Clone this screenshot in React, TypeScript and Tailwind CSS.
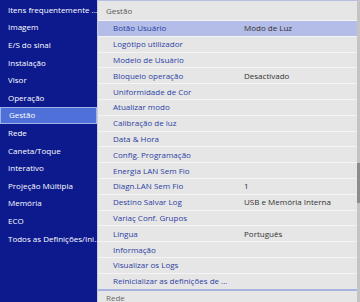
const menu = [
  "Itens frequentemente ...",
  "Imagem",
  "E/S do sinal",
  "Instalação",
  "Visor",
  "Operação",
  "Gestão",
  "Rede",
  "Caneta/Toque",
  "Interativo",
  "Projeção Múltipla",
  "Memória",
  "ECO",
  "Todos as Definições/Ini...",
];

const rows: [string, string][] = [
  ["Botão Usuário", "Modo de Luz"],
  ["Logótipo utilizador", ""],
  ["Modelo de Usuário", ""],
  ["Bloqueio operação", "Desactivado"],
  ["Uniformidade de Cor", ""],
  ["Atualizar modo", ""],
  ["Calibração de luz", ""],
  ["Data & Hora", ""],
  ["Config. Programação", ""],
  ["Energia LAN Sem Fio", ""],
  ["Diagn.LAN Sem Fio", "1"],
  ["Destino Salvar Log", "USB e Memória Interna"],
  ["Variaç Conf. Grupos", ""],
  ["Língua", "Português"],
  ["Informação", ""],
  ["Visualizar os Logs", ""],
  ["Reinicializar as definições de ...", ""],
];

export default function App() {
  return (
    <div
      className="w-[360px] h-[302px] flex overflow-hidden bg-[#e6e6e6] text-[8px] leading-none"
      style={{ fontFamily: '"Open Sans", "Noto Sans", sans-serif' }}
    >
      {/* Left menu */}
      <div className="w-[98px] shrink-0 bg-[#0c1a8e] pt-px border-r border-[#c9cce0]">
        {menu.map((m) => (
          <div
            key={m}
            className={
              m === "Gestão"
                ? "h-[17.6px] flex items-center pl-2 text-white bg-[#4f70d8] border border-[#9fb2ee]"
                : "h-[17.6px] flex items-center pl-2 text-white whitespace-nowrap"
            }
          >
            {m}
          </div>
        ))}
      </div>

      {/* Right panel */}
      <div className="flex-1 flex flex-col">
        <div className="h-[21px] shrink-0 flex items-center pl-2 text-[#5a5a5a] border-t border-[#b7bfe3] border-b border-b-[#f4f4f4]">
          Gestão
        </div>
        {rows.map(([label, value], i) => (
          <div
            key={label}
            className={
              (i === 0 ? "bg-[#b3bde8] " : "") +
              "h-[15.8px] shrink-0 flex items-center border-b border-[#f4f4f4] pl-[15px] text-[#2b3ea3] whitespace-nowrap"
            }
          >
            <span className="w-[131px] shrink-0">{label}</span>
            <span className="text-[#333333]">{value}</span>
          </div>
        ))}
        <div className="h-[2px] shrink-0 bg-[#aab3df] mt-[-1px]" />
        <div className="flex-1 pl-2 pt-[3px] text-[#6a6a6a]">Rede</div>
      </div>

      {/* Scrollbar */}
      <div className="w-[3px] shrink-0 bg-[#c4c4c4] flex flex-col">
        <div className="h-[163px]" />
        <div className="h-[40px] bg-[#8c8c8c]" />
      </div>
    </div>
  );
}
